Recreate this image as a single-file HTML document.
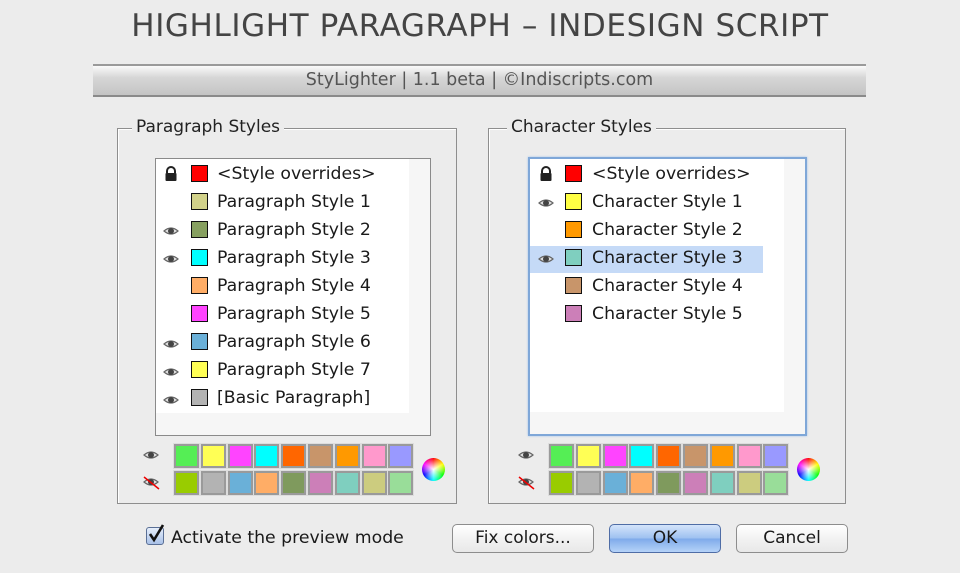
<!DOCTYPE html>
<html><head><meta charset="utf-8"><style>
*{margin:0;padding:0;box-sizing:border-box}
body{width:960px;height:573px;background:#ececec;font-family:"DejaVu Sans","Liberation Sans",sans-serif;color:#1a1a1a;position:relative;overflow:hidden}
.a{position:absolute}
.title{left:0;width:960px;top:8px;text-align:center;font-size:31px;color:#444;letter-spacing:0.6px;font-family:"DejaVu Sans",sans-serif}
.bar{left:93px;top:64px;width:773px;height:33px;background:linear-gradient(#fafafa,#d6d6d6 40%,#c4c4c4);border-top:2px solid #9a9a9a;border-bottom:2px solid #8a8a8a;text-align:center;font-size:17.5px;line-height:29px;color:#555}
.grp{border:1px solid #8e8e8e;box-shadow:1px 1px 0 #fff inset}
.leg{background:#ececec;padding:0 4px;font-size:17px;top:-12px;line-height:20px;color:#222}
.list{background:#f6f6f6;border:1px solid #8a8a8a}
.wh{background:#fff}
.row{position:absolute;height:28px;font-size:17.3px;line-height:28px}
.sw{position:absolute;width:17px;height:17px;border:1.5px solid #111}
.pal{position:absolute;width:25px;height:24px;border:2px solid #9a9a9a;box-shadow:0 0 0 1px #ddd}
.btn{position:absolute;height:29px;border:1px solid #8d8d8d;border-radius:5px;background:linear-gradient(#fff,#f2f2f2 50%,#e8e8e8);text-align:center;font-size:17px;line-height:27px}
.wheel{position:absolute;width:23px;height:23px;border-radius:50%;background:radial-gradient(circle,#fff 0,rgba(255,255,255,0) 70%),conic-gradient(red,#ff0,#0f0,#0ff,#00f,#f0f,red)}
</style></head><body>
<div class="a title">HIGHLIGHT PARAGRAPH – INDESIGN SCRIPT</div>
<div class="a bar">StyLighter | 1.1 beta | ©Indiscripts.com</div>

<div class="a grp" style="left:117px;top:128px;width:340px;height:376px"><div class="a leg" style="left:14px">Paragraph Styles</div></div>
<div class="a grp" style="left:488px;top:128px;width:358px;height:376px"><div class="a leg" style="left:18px">Character Styles</div></div>

<div class="a list" style="left:155px;top:158px;width:276px;height:278px"><div class="a wh" style="left:0;top:0;width:253px;height:254px"></div></div>
<div class="a list" style="left:528px;top:157px;width:279px;height:279px;border:2px solid #7fa7d8;box-shadow:0 0 2px #9bc0ee"><div class="a wh" style="left:0;top:0;width:254px;height:253px"></div><div class="a" style="left:0;top:87px;width:233px;height:27px;background:#c5daf7"></div></div>

<svg width="0" height="0" style="position:absolute"><defs>
<g id="eye"><path d="M1 6 Q8 0 15 6 Q8 12 1 6Z" fill="#e0e0e0" stroke="#666" stroke-width="1.2"/><circle cx="8" cy="6" r="3" fill="#444"/></g>
<g id="lock"><path d="M4 7V5a4 4 0 0 1 8 0v2" fill="none" stroke="#222" stroke-width="2"/><rect x="2.5" y="7" width="11" height="8" rx="1" fill="#222"/></g>
</defs></svg>

<svg class="a" style="left:163px;top:166px" width="16" height="16"><use href="#lock"/></svg>
<svg class="a" style="left:163px;top:225px" width="16" height="13"><use href="#eye"/></svg>
<svg class="a" style="left:163px;top:253px" width="16" height="13"><use href="#eye"/></svg>
<svg class="a" style="left:163px;top:338px" width="16" height="13"><use href="#eye"/></svg>
<svg class="a" style="left:163px;top:366px" width="16" height="13"><use href="#eye"/></svg>
<svg class="a" style="left:163px;top:394px" width="16" height="13"><use href="#eye"/></svg>

<div class="sw" style="left:191px;top:165px;background:#f00"></div><div class="row" style="left:217px;top:160px">&lt;Style overrides&gt;</div>
<div class="sw" style="left:191px;top:193px;background:#d2d28a"></div><div class="row" style="left:217px;top:188px">Paragraph Style 1</div>
<div class="sw" style="left:191px;top:221px;background:#87a060"></div><div class="row" style="left:217px;top:216px">Paragraph Style 2</div>
<div class="sw" style="left:191px;top:249px;background:#0ff"></div><div class="row" style="left:217px;top:244px">Paragraph Style 3</div>
<div class="sw" style="left:191px;top:277px;background:#ffad66"></div><div class="row" style="left:217px;top:272px">Paragraph Style 4</div>
<div class="sw" style="left:191px;top:305px;background:#ff44ff"></div><div class="row" style="left:217px;top:300px">Paragraph Style 5</div>
<div class="sw" style="left:191px;top:333px;background:#6ab0d8"></div><div class="row" style="left:217px;top:328px">Paragraph Style 6</div>
<div class="sw" style="left:191px;top:361px;background:#ffff55"></div><div class="row" style="left:217px;top:356px">Paragraph Style 7</div>
<div class="sw" style="left:191px;top:389px;background:#b3b3b3"></div><div class="row" style="left:217px;top:384px">[Basic Paragraph]</div>

<svg class="a" style="left:538px;top:166px" width="16" height="16"><use href="#lock"/></svg>
<svg class="a" style="left:538px;top:197px" width="16" height="13"><use href="#eye"/></svg>
<svg class="a" style="left:538px;top:253px" width="16" height="13"><use href="#eye"/></svg>
<div class="sw" style="left:565px;top:165px;background:#f00"></div><div class="row" style="left:592px;top:160px">&lt;Style overrides&gt;</div>
<div class="sw" style="left:565px;top:193px;background:#ffff44"></div><div class="row" style="left:592px;top:188px">Character Style 1</div>
<div class="sw" style="left:565px;top:221px;background:#ff9900"></div><div class="row" style="left:592px;top:216px">Character Style 2</div>
<div class="sw" style="left:565px;top:249px;background:#7fcfbf"></div><div class="row" style="left:592px;top:244px">Character Style 3</div>
<div class="sw" style="left:565px;top:277px;background:#c8956a"></div><div class="row" style="left:592px;top:272px">Character Style 4</div>
<div class="sw" style="left:565px;top:305px;background:#cc7fb8"></div><div class="row" style="left:592px;top:300px">Character Style 5</div>

<svg class="a" style="left:143px;top:449px" width="16" height="13"><use href="#eye"/></svg>
<svg class="a" style="left:143px;top:476px" width="17" height="14"><use href="#eye"/><line x1="1" y1="1" x2="16" y2="13" stroke="#e00" stroke-width="1.5"/></svg>
<svg class="a" style="left:518px;top:449px" width="16" height="13"><use href="#eye"/></svg>
<svg class="a" style="left:518px;top:476px" width="17" height="14"><use href="#eye"/><line x1="1" y1="1" x2="16" y2="13" stroke="#e00" stroke-width="1.5"/></svg>
<div id="p"></div>
<div class="wheel" style="left:422px;top:458px"></div>
<div class="wheel" style="left:797px;top:458px"></div>

<div class="a" style="left:146px;top:527px;width:18px;height:18px;border:1px solid #5a6f95;border-radius:3px;background:linear-gradient(#e6eefb,#a9c1e8)"></div>
<svg class="a" style="left:146px;top:522px" width="20" height="22"><path d="M4 12 L8 18 L17 3" fill="none" stroke="#111" stroke-width="2.6"/></svg>
<div class="a" style="left:171px;top:527px;font-size:17.3px;line-height:22px">Activate the preview mode</div>
<div class="btn" style="left:452px;top:524px;width:142px">Fix colors...</div>
<div class="btn" style="left:609px;top:524px;width:112px;border-color:#4f6da6;background:linear-gradient(#d4e4fb,#9dc0f0 50%,#7eaaea 51%,#b5d3f8)">OK</div>
<div class="btn" style="left:736px;top:524px;width:112px">Cancel</div>

<script>
var r1=["#55ee55","#ffff55","#ff44ff","#00ffff","#ff6600","#c8956a","#ff9900","#ff99cc","#9999ff"],
r2=["#99cc00","#b3b3b3","#6ab0d8","#ffad66","#7f9a5d","#cc7fb8","#7fcfbf","#cccc7f","#99dd99"],h="";
[174,549].forEach(function(x0){for(var i=0;i<9;i++){
h+='<div class="pal" style="left:'+(x0+i*26.8)+'px;top:444px;background:'+r1[i]+'"></div>';
h+='<div class="pal" style="left:'+(x0+i*26.8)+'px;top:471px;background:'+r2[i]+'"></div>';}});
document.getElementById("p").innerHTML=h;
</script>
</body></html>
